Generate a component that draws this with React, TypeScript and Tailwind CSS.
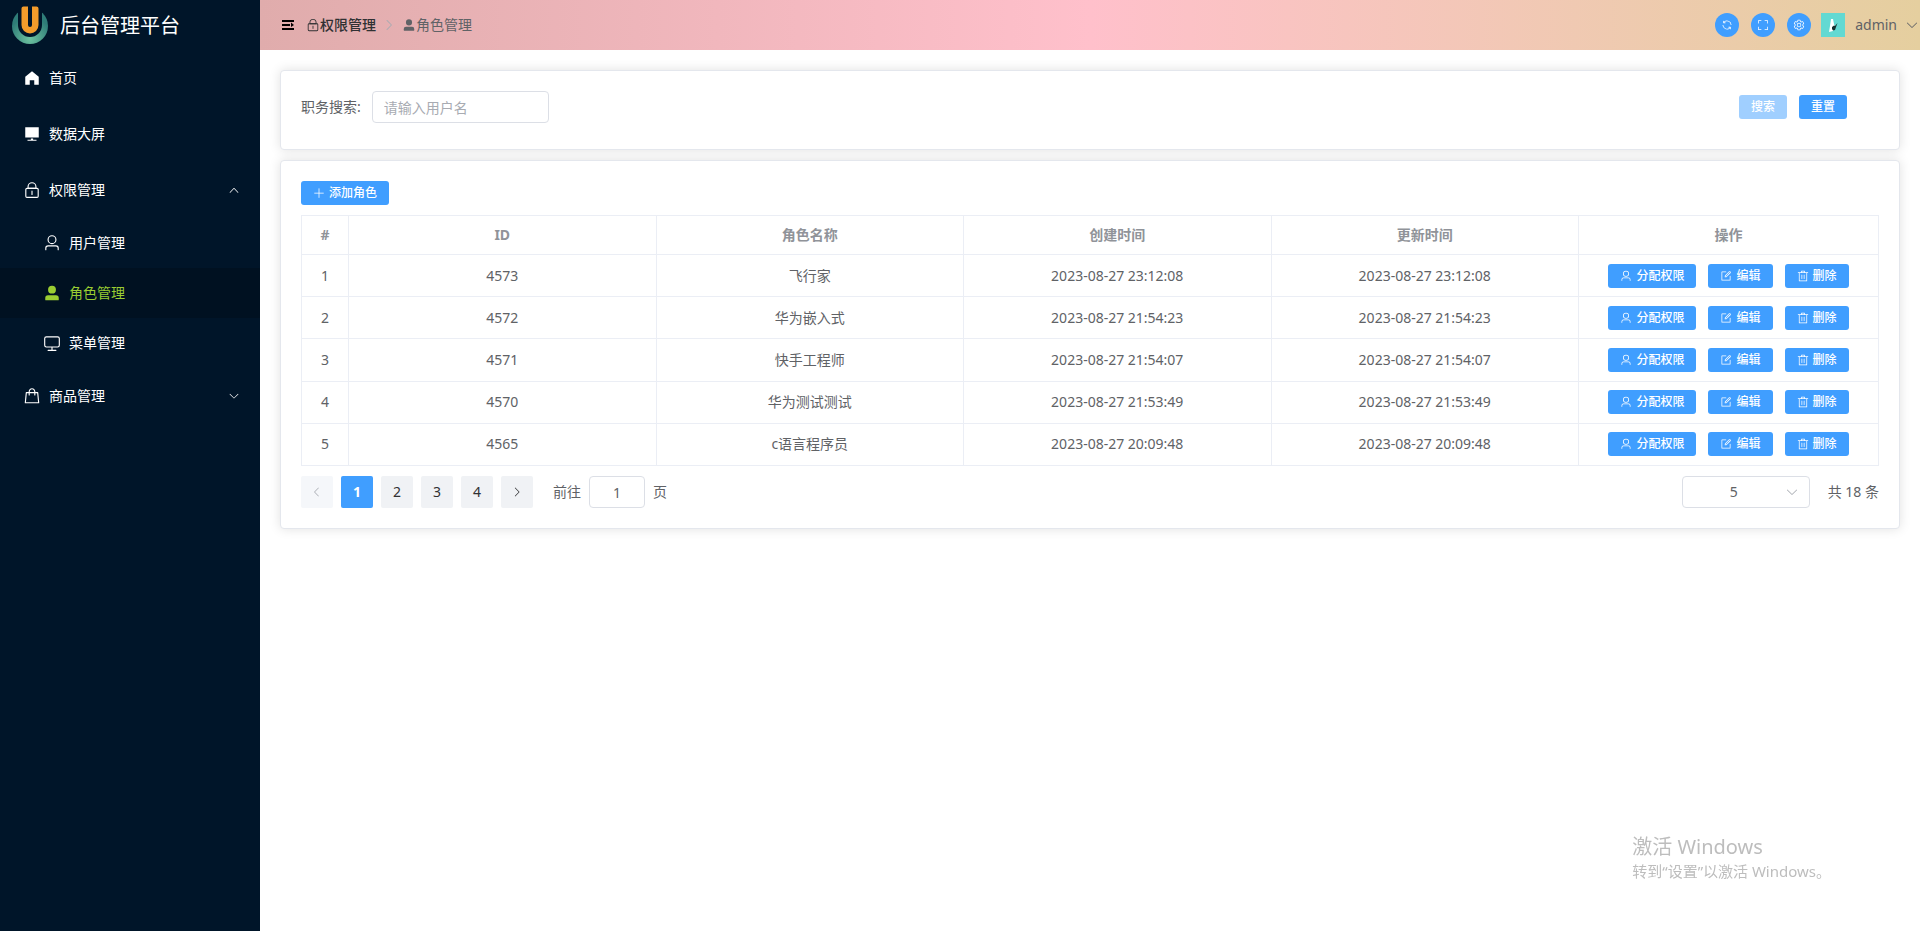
import React, { useState } from "react";
import clsx from "clsx";

interface Role {
  id: number;
  roleName: string;
  createTime: string;
  updateTime: string;
}

interface IconProps {
  name: keyof typeof iconPaths;
  className?: string;
}

const iconPaths = {
  home: ["M512 128 128 447.936V896h255.936V640H640v256h255.936V447.936z"],
  platform: [
    "M448 832v-64h128v64h192v64H256v-64zM128 704V128h768v576z",
  ],
  lock: [
    "M224 448a32 32 0 0 0-32 32v384a32 32 0 0 0 32 32h576a32 32 0 0 0 32-32V480a32 32 0 0 0-32-32zm0-64h576a96 96 0 0 1 96 96v384a96 96 0 0 1-96 96H224a96 96 0 0 1-96-96V480a96 96 0 0 1 96-96",
    "M512 544a32 32 0 0 1 32 32v192a32 32 0 1 1-64 0V576a32 32 0 0 1 32-32m192-160v-64a192 192 0 1 0-384 0v64zM512 64a256 256 0 0 1 256 256v128H256V320A256 256 0 0 1 512 64",
  ],
  user: [
    "M512 512a192 192 0 1 0 0-384 192 192 0 0 0 0 384m0 64a256 256 0 1 1 0-512 256 256 0 0 1 0 512m320 320v-96a96 96 0 0 0-96-96H288a96 96 0 0 0-96 96v96a32 32 0 1 1-64 0v-96a160 160 0 0 1 160-160h448a160 160 0 0 1 160 160v96a32 32 0 1 1-64 0",
  ],
  userFilled: [
    "M288 320a224 224 0 1 0 448 0 224 224 0 1 0-448 0m544 608H160a32 32 0 0 1-32-32v-96a160 160 0 0 1 160-160h448a160 160 0 0 1 160 160v96a32 32 0 0 1-32 32z",
  ],
  monitor: [
    "M544 768v128h192a32 32 0 1 1 0 64H288a32 32 0 1 1 0-64h192V768H192A128 128 0 0 1 64 640V256a128 128 0 0 1 128-128h640a128 128 0 0 1 128 128v384a128 128 0 0 1-128 128zM192 192a64 64 0 0 0-64 64v384a64 64 0 0 0 64 64h640a64 64 0 0 0 64-64V256a64 64 0 0 0-64-64z",
  ],
  goods: [
    "M320 288v-22.336C320 154.688 405.504 64 512 64s192 90.688 192 201.664v22.4h131.072a32 32 0 0 1 31.808 28.8l57.6 576a32 32 0 0 1-31.808 35.2H131.328a32 32 0 0 1-31.808-35.2l57.6-576a32 32 0 0 1 31.808-28.8H320zm64 0h256v-22.336C640 189.248 582.272 128 512 128s-128 61.248-128 137.664v22.4zm-64 64H217.92l-51.2 512h690.56l-51.264-512H704v96a32 32 0 1 1-64 0v-96H384v96a32 32 0 0 1-64 0z",
  ],
  arrowDown: [
    "M831.872 340.864 512 652.672 192.128 340.864a30.592 30.592 0 0 0-42.752 0 29.12 29.12 0 0 0 0 41.6L489.664 714.24a32 32 0 0 0 44.672 0l340.288-331.712a29.12 29.12 0 0 0 0-41.728 30.592 30.592 0 0 0-42.752 0z",
  ],
  arrowUp: [
    "m488.832 344.32-339.84 356.672a32 32 0 0 0 0 44.16l.384.384a29.44 29.44 0 0 0 42.688 0l320-335.872 319.872 335.872a29.44 29.44 0 0 0 42.688 0l.384-.384a32 32 0 0 0 0-44.16L535.168 344.32a32 32 0 0 0-46.336 0",
  ],
  arrowLeft: [
    "M609.408 149.376 277.76 489.6a32 32 0 0 0 0 44.672l331.648 340.352a29.12 29.12 0 0 0 41.728 0 30.592 30.592 0 0 0 0-42.752L339.264 511.936l311.872-319.872a30.592 30.592 0 0 0 0-42.688 29.12 29.12 0 0 0-41.728 0z",
  ],
  arrowRight: [
    "M340.864 149.312a30.592 30.592 0 0 0 0 42.752L652.736 512 340.864 831.872a30.592 30.592 0 0 0 0 42.752 29.12 29.12 0 0 0 41.728 0L714.24 534.336a32 32 0 0 0 0-44.672L382.592 149.376a29.12 29.12 0 0 0-41.728 0z",
  ],
  expand: [
    "M128 192h768v128H128zm0 256h512v128H128zm0 256h768v128H128zm576-352 192 160-192 128z",
  ],
  refresh: [
    "M771.776 794.88A384 384 0 0 1 128 512h64a320 320 0 0 0 555.712 216.448H654.72a32 32 0 1 1 0-64h149.056a32 32 0 0 1 32 32v148.928a32 32 0 1 1-64 0v-50.56zM276.288 295.616h92.992a32 32 0 0 1 0 64H220.16a32 32 0 0 1-32-32V178.56a32 32 0 0 1 64 0v50.56A384 384 0 0 1 896.128 512h-64a320 320 0 0 0-555.776-216.384z",
  ],
  fullScreen: [
    "m160 96.064 192 .192a32 32 0 0 1 0 64l-192-.192V352a32 32 0 0 1-64 0V96h64zm0 831.872V928H96V672a32 32 0 1 1 64 0v191.936l192-.192a32 32 0 1 1 0 64zM864 96.064V96h64v256a32 32 0 1 1-64 0V160.064l-192 .192a32 32 0 1 1 0-64zm0 831.872-192-.192a32 32 0 0 1 0-64l192 .192V672a32 32 0 1 1 64 0v256h-64z",
  ],
  setting: [
    "M600.704 64a32 32 0 0 1 30.464 22.208l35.2 109.376c14.784 7.232 28.928 15.36 42.432 24.512l112.384-24.192a32 32 0 0 1 34.432 15.36L944.32 364.8a32 32 0 0 1-4.032 37.504l-77.12 85.12a357.12 357.12 0 0 1 0 49.024l77.12 85.248a32 32 0 0 1 4.032 37.504l-88.704 153.6a32 32 0 0 1-34.432 15.296L708.8 803.904c-13.44 9.088-27.648 17.28-42.368 24.512l-35.264 109.376A32 32 0 0 1 600.704 960H423.296a32 32 0 0 1-30.464-22.208L357.696 828.48a351.616 351.616 0 0 1-42.56-24.64l-112.32 24.256a32 32 0 0 1-34.432-15.36L79.68 659.2a32 32 0 0 1 4.032-37.504l77.12-85.248a357.12 357.12 0 0 1 0-48.896l-77.12-85.248A32 32 0 0 1 79.68 364.8l88.704-153.6a32 32 0 0 1 34.432-15.296l112.32 24.256c13.568-9.152 27.776-17.408 42.56-24.64l35.2-109.312A32 32 0 0 1 423.232 64H600.64zm-23.424 64H446.72l-36.352 113.088-24.512 11.968a294.113 294.113 0 0 0-34.816 20.096l-22.656 15.36-116.224-25.088-65.28 113.152 79.68 88.192-1.92 27.136a293.12 293.12 0 0 0 0 40.192l1.92 27.136-79.808 88.192 65.344 113.152 116.224-25.024 22.656 15.296a294.113 294.113 0 0 0 34.816 20.096l24.512 11.968L446.72 896h130.688l36.48-113.152 24.448-11.904a288.282 288.282 0 0 0 34.752-20.096l22.592-15.296 116.288 25.024 65.28-113.152-79.744-88.192 1.92-27.136a293.12 293.12 0 0 0 0-40.256l-1.92-27.136 79.808-88.128-65.344-113.152-116.288 24.96-22.592-15.232a287.616 287.616 0 0 0-34.752-20.096l-24.448-11.904L577.344 128zM512 320a192 192 0 1 1 0 384 192 192 0 0 1 0-384m0 64a128 128 0 1 0 0 256 128 128 0 0 0 0-256",
  ],
  plus: [
    "M480 480V128a32 32 0 0 1 64 0v352h352a32 32 0 1 1 0 64H544v352a32 32 0 1 1-64 0V544H128a32 32 0 0 1 0-64z",
  ],
  edit: [
    "M832 512a32 32 0 1 1 64 0v352a32 32 0 0 1-32 32H160a32 32 0 0 1-32-32V160a32 32 0 0 1 32-32h352a32 32 0 0 1 0 64H192v640h640z",
    "m469.952 554.24 52.8-7.552L847.104 222.4a32 32 0 1 0-45.248-45.248L477.44 501.44l-7.552 52.8zm422.4-422.4a96 96 0 0 1 0 135.808l-331.84 331.84a32 32 0 0 1-18.112 9.088L436.8 623.68a32 32 0 0 1-36.224-36.224l15.104-105.6a32 32 0 0 1 9.024-18.112l331.904-331.84a96 96 0 0 1 135.744 0z",
  ],
  del: [
    "M160 256H96a32 32 0 0 1 0-64h256V95.936a32 32 0 0 1 32-32h256a32 32 0 0 1 32 32V192h256a32 32 0 1 1 0 64h-64v672a32 32 0 0 1-32 32H192a32 32 0 0 1-32-32zm448-64v-64H416v64zM224 896h576V256H224zm192-128a32 32 0 0 1-32-32V416a32 32 0 0 1 64 0v320a32 32 0 0 1-32 32m192 0a32 32 0 0 1-32-32V416a32 32 0 0 1 64 0v320a32 32 0 0 1-32 32",
  ],
};

const roles: Role[] = [
  { id: 4573, roleName: "飞行家", createTime: "2023-08-27 23:12:08", updateTime: "2023-08-27 23:12:08" },
  { id: 4572, roleName: "华为嵌入式", createTime: "2023-08-27 21:54:23", updateTime: "2023-08-27 21:54:23" },
  { id: 4571, roleName: "快手工程师", createTime: "2023-08-27 21:54:07", updateTime: "2023-08-27 21:54:07" },
  { id: 4570, roleName: "华为测试测试", createTime: "2023-08-27 21:53:49", updateTime: "2023-08-27 21:53:49" },
  { id: 4565, roleName: "c语言程序员", createTime: "2023-08-27 20:09:48", updateTime: "2023-08-27 20:09:48" },
];

const Icon = ({ name, className }: IconProps) => (
  <svg viewBox="0 0 1024 1024" fill="currentColor" aria-hidden="true" className={clsx("shrink-0", className)}>
    {iconPaths[name].map((d) => (
      <path key={d} d={d} />
    ))}
  </svg>
);

const Logo = () => (
  <svg viewBox="0 0 36 40" className="h-10 w-9 shrink-0" aria-hidden="true">
    <defs>
      <radialGradient id="ring" cx="50%" cy="85%" r="60%">
        <stop offset="0" stopColor="#6fc3a0" />
        <stop offset="1" stopColor="#2f7d78" />
      </radialGradient>
    </defs>
    <circle cx="18" cy="21" r="18" fill="url(#ring)" />
    <path d="M6 0h24v20a12 12 0 0 1-24 0z" fill="#001529" />
    <path
      d="M9.500 3.500q0-2 2-2H16v18.500a2 2 0 0 0 4 0V1.500h4.500q2 0 2 2V20a8.500 8.500 0 0 1-17 0z"
      fill="#f39c2b"
    />
  </svg>
);

const Avatar = () => (
  <svg viewBox="0 0 24 24" className="size-6" role="img" aria-label="avatar">
    <path d="M0 0h24v24H0z" fill="#63d9d2" />
    <path d="m10 6 2 0 1 5 1 3-2 4-4 1 1-6z" fill="#fff" />
    <path d="m11 14 2-1.500 1 .5 2.500-3-1.500 4-1 3-2 .5-1-1.500z" fill="#14302f" />
  </svg>
);

interface MenuItemProps {
  icon: keyof typeof iconPaths;
  label: string;
  arrow?: "arrowUp" | "arrowDown";
  sub?: boolean;
  active?: boolean;
  onClick?: () => void;
}

const MenuItem = ({ icon, label, arrow, sub, active, onClick }: MenuItemProps) => {
  const classes = clsx(
    "flex w-full items-center pr-5 text-left",
    sub ? "h-[50px] pl-10" : "h-14 pl-5",
    active ? "bg-[#001121] text-[#9acd32]" : "text-white"
  );
  const content = (
    <>
      <span className="mr-[5px] flex w-6 justify-center">
        <Icon name={icon} className="size-[18px]" />
      </span>
      <span className="flex-1">{label}</span>
      {arrow && <Icon name={arrow} className="size-3" />}
    </>
  );

  return (
    <li>
      {arrow ? (
        <button type="button" className={classes} onClick={onClick}>
          {content}
        </button>
      ) : (
        <a href="#" className={classes}>
          {content}
        </a>
      )}
    </li>
  );
};

interface SmallButtonProps {
  icon?: keyof typeof iconPaths;
  children: React.ReactNode;
  disabled?: boolean;
  onClick?: () => void;
}

const SmallButton = ({ icon, children, disabled, onClick }: SmallButtonProps) => (
  <button
    type="button"
    disabled={disabled}
    onClick={onClick}
    className="flex h-6 items-center gap-1 rounded-[3px] bg-[#409eff] px-3 text-xs font-medium whitespace-nowrap text-white disabled:bg-[#a0cfff]"
  >
    {icon && <Icon name={icon} className="size-3" />}
    {children}
  </button>
);

const CircleButton = ({ icon, label }: { icon: keyof typeof iconPaths; label: string }) => (
  <button
    type="button"
    aria-label={label}
    className="flex size-6 items-center justify-center rounded-full bg-[#409eff] text-white"
  >
    <Icon name={icon} className="size-3" />
  </button>
);

const Sidebar = () => {
  const [authOpen, setAuthOpen] = useState(true);
  const [goodsOpen, setGoodsOpen] = useState(false);

  return (
    <aside className="w-[260px] shrink-0 bg-[#001529]">
      <div className="flex h-[50px] items-center gap-3 pl-3 text-xl text-white">
        <Logo />
        <p className="pt-0.5">后台管理平台</p>
      </div>
      <ul>
        <MenuItem icon="home" label="首页" />
        <MenuItem icon="platform" label="数据大屏" />
        <MenuItem
          icon="lock"
          label="权限管理"
          arrow={authOpen ? "arrowUp" : "arrowDown"}
          onClick={() => setAuthOpen(!authOpen)}
        />
        {authOpen && (
          <>
            <MenuItem sub icon="user" label="用户管理" />
            <MenuItem sub active icon="userFilled" label="角色管理" />
            <MenuItem sub icon="monitor" label="菜单管理" />
          </>
        )}
        <MenuItem
          icon="goods"
          label="商品管理"
          arrow={goodsOpen ? "arrowUp" : "arrowDown"}
          onClick={() => setGoodsOpen(!goodsOpen)}
        />
      </ul>
    </aside>
  );
};

const Header = () => (
  <header className="flex h-[50px] items-center justify-between bg-linear-to-r from-[#e0acac] via-[#ffc0cb] to-[#e5cf9f] pl-5">
    <div className="flex items-center">
      <button type="button" aria-label="折叠菜单" className="mr-[10px] text-black">
        <Icon name="expand" className="size-4" />
      </button>
      <nav className="flex items-center">
        <a href="#" className="flex items-center font-medium text-[#303133]">
          <Icon name="lock" className="size-[14px]" />
          权限管理
        </a>
        <Icon name="arrowRight" className="mx-[6px] size-[14px] text-[#a8abb2]" />
        <span className="flex items-center text-[#606266]">
          <Icon name="userFilled" className="size-[14px]" />
          角色管理
        </span>
      </nav>
    </div>
    <div className="flex items-center pr-px">
      <div className="mr-[10px] flex gap-3">
        <CircleButton icon="refresh" label="刷新" />
        <CircleButton icon="fullScreen" label="全屏" />
        <CircleButton icon="setting" label="设置" />
      </div>
      <Avatar />
      <button type="button" className="ml-[10px] flex items-center gap-2 text-[#606266]">
        admin
        <Icon name="arrowDown" className="size-[14px]" />
      </button>
    </div>
  </header>
);

const SearchCard = () => {
  const [keyword, setKeyword] = useState("");

  return (
    <section className="rounded-[4px] border border-[#e4e7ed] bg-white px-5 pt-5 pb-[26px] shadow-[0_0_12px_rgba(0,0,0,0.12)]">
      <form className="flex items-center justify-between pr-8">
        <div className="flex items-center gap-[11px]">
          <label htmlFor="keyword">职务搜索:</label>
          <input
            id="keyword"
            value={keyword}
            onChange={(e) => setKeyword(e.target.value)}
            placeholder="请输入用户名"
            className="h-8 w-[177px] rounded-[4px] border border-[#dcdfe6] px-[11px] placeholder:text-[#a8abb2]"
          />
        </div>
        <div className="flex gap-3">
          <SmallButton disabled={!keyword}>搜索</SmallButton>
          <SmallButton onClick={() => setKeyword("")}>重置</SmallButton>
        </div>
      </form>
    </section>
  );
};

const pagerClass = "flex size-8 items-center justify-center rounded-[2px]";

const Pagination = () => {
  const [page, setPage] = useState(1);

  return (
    <div className="mt-[10px] flex items-center justify-between">
      <div className="flex items-center gap-2">
        <button
          type="button"
          aria-label="上一页"
          disabled={page === 1}
          onClick={() => setPage(page - 1)}
          className={clsx(pagerClass, "bg-[#f0f2f5] disabled:bg-[#f5f7fa] disabled:text-[#a8abb2]")}
        >
          <Icon name="arrowLeft" className="size-3" />
        </button>
        {[1, 2, 3, 4].map((n) => (
          <button
            key={n}
            type="button"
            onClick={() => setPage(n)}
            className={clsx(
              pagerClass,
              n === page ? "bg-[#409eff] font-bold text-white" : "bg-[#f0f2f5] text-[#303133]"
            )}
          >
            {n}
          </button>
        ))}
        <button
          type="button"
          aria-label="下一页"
          disabled={page === 4}
          onClick={() => setPage(page + 1)}
          className={clsx(pagerClass, "bg-[#f0f2f5] text-[#303133]")}
        >
          <Icon name="arrowRight" className="size-3" />
        </button>
        <label htmlFor="jumper" className="ml-3">
          前往
        </label>
        <input
          id="jumper"
          value={page}
          onChange={(e) => setPage(Number(e.target.value) || 1)}
          className="h-8 w-14 rounded-[4px] border border-[#dcdfe6] text-center"
        />
        <span>页</span>
      </div>
      <div className="flex items-center gap-[18px]">
        <div className="relative">
          <select
            aria-label="每页条数"
            className="h-8 w-32 appearance-none rounded-[4px] border border-[#dcdfe6] bg-white pr-6 text-center"
          >
            <option>5</option>
            <option>7</option>
            <option>9</option>
          </select>
          <Icon
            name="arrowDown"
            className="pointer-events-none absolute top-[9px] right-[11px] size-[14px] text-[#a8abb2]"
          />
        </div>
        <span>共 18 条</span>
      </div>
    </div>
  );
};

const RoleCard = () => (
  <section className="mt-[10px] rounded-[4px] border border-[#e4e7ed] bg-white p-5 shadow-[0_0_12px_rgba(0,0,0,0.12)]">
    <SmallButton icon="plus">添加角色</SmallButton>
    <table className="mt-[10px] h-[251px] w-full table-fixed border-collapse text-center [&_td]:border [&_td]:border-[#ebeef5] [&_th]:border [&_th]:border-[#ebeef5]">
      <colgroup>
        <col className="w-[47px]" />
        <col />
        <col />
        <col />
        <col />
        <col className="w-[300px]" />
      </colgroup>
      <thead className="text-[#909399]">
        <tr className="h-[39px]">
          <th>#</th>
          <th>ID</th>
          <th>角色名称</th>
          <th>创建时间</th>
          <th>更新时间</th>
          <th>操作</th>
        </tr>
      </thead>
      <tbody>
        {roles.map((role, index) => (
          <tr key={role.id} className="h-[42px]">
            <td>{index + 1}</td>
            <td>{role.id}</td>
            <td>{role.roleName}</td>
            <td>{role.createTime}</td>
            <td>{role.updateTime}</td>
            <td>
              <div className="flex justify-center gap-3">
                <SmallButton icon="user">分配权限</SmallButton>
                <SmallButton icon="edit">编辑</SmallButton>
                <SmallButton icon="del">删除</SmallButton>
              </div>
            </td>
          </tr>
        ))}
      </tbody>
    </table>
    <Pagination />
  </section>
);

const App = () => {
  return (
    <div className="flex min-h-screen bg-white font-['Noto_Sans','Noto_Sans_CJK_SC',sans-serif] text-sm text-[#606266]">
      <Sidebar />
      <div className="min-w-0 flex-1">
        <Header />
        <main className="p-5">
          <SearchCard />
          <RoleCard />
        </main>
      </div>

      {/* System activation notice */}
      <div className="pointer-events-none fixed right-[89px] bottom-[50px] text-[#bdbdbd]">
        <p className="text-xl leading-7">激活 Windows</p>
        <p className="text-[15px] leading-5">转到“设置”以激活 Windows。</p>
      </div>
    </div>
  );
};

export default App;
